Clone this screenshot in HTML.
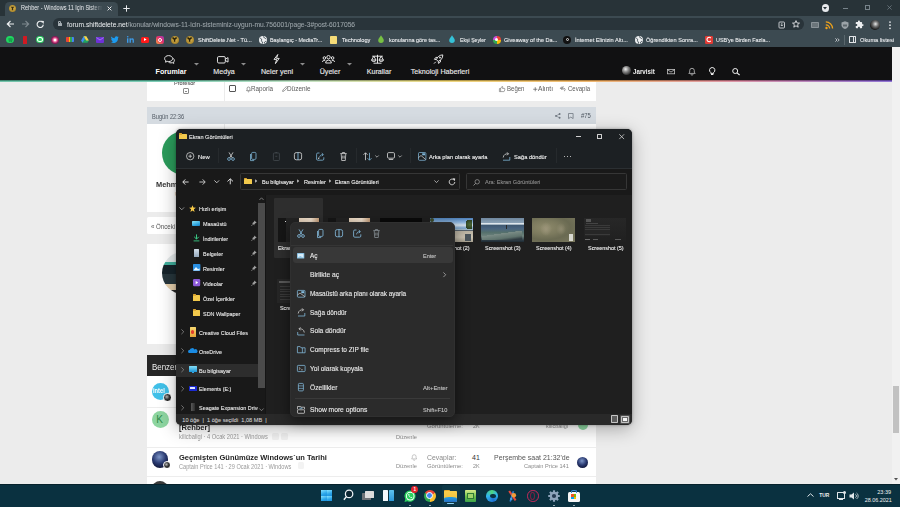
<!DOCTYPE html>
<html><head><meta charset="utf-8"><style>
*{margin:0;padding:0;box-sizing:border-box}
html,body{width:900px;height:507px;overflow:hidden;background:#ececec;font-family:"Liberation Sans",sans-serif}
.a{position:absolute}
.t{position:absolute;white-space:nowrap;line-height:1}
svg{position:absolute;overflow:visible}
.card{position:absolute;background:#fff}
</style></head><body>
<div class="a" style="left:0px;top:0px;width:900px;height:16px;background:#283338;"></div>
<div class="a" style="left:5px;top:2px;width:112.5px;height:14px;background:#3c4a51;border-radius:4.5px 4.5px 0 0"></div>
<div class="a" style="left:0px;top:15.5px;width:900px;height:17px;background:#3c4a51;"></div>
<div class="a" style="left:53px;top:17.8px;width:750.5px;height:12.4px;background:#29343a;border-radius:6.2px"></div>
<div class="a" style="left:0px;top:32px;width:900px;height:15.5px;background:#3c4a51;"></div>
<div class="a" style="left:9px;top:5.2px;width:7.2px;height:7.2px;background:radial-gradient(circle at 50% 45%,#e6c25a,#b08a2a 70%,#6d5418);border-radius:50%"></div>
<svg style="left:10.2px;top:6.3px;" width="5" height="5" viewBox="0 0 5 5"><path d="M0.8 0.8H4.2L3.2 2.3V4.2H1.8V2.3Z" fill="#3a2e10"/></svg>
<div class="t" style="left:20.8px;top:5.3px;font-size:6.5px;color:#e8eaed;width:96px;overflow:hidden;-webkit-mask-image:linear-gradient(90deg,#000 86%,transparent 100%);transform:scaleX(0.85);transform-origin:0 0">Rehber - Windows 11 İçin Sisteminiz Uygun mu</div>
<svg style="left:107px;top:5.6px;" width="5" height="5" viewBox="0 0 5 5"><path d="M0.6 0.6L4.4 4.4M4.4 0.6L0.6 4.4" stroke="#e8eaed" stroke-width="1"/></svg>
<svg style="left:122.8px;top:4.8px;" width="7" height="7" viewBox="0 0 7 7"><path d="M3.5 0.3V6.7M0.3 3.5H6.7" stroke="#e8eaed" stroke-width="1"/></svg>
<div class="a" style="left:821.5px;top:4.3px;width:7.6px;height:7.6px;background:#e8eaed;border-radius:50%"></div>
<svg style="left:823.3px;top:7px;" width="4" height="2.6" viewBox="0 0 4 2.6"><path d="M0 0H4L2 2.4Z" fill="#283338"/></svg>
<div class="a" style="left:843px;top:7.8px;width:5px;height:0.7px;background:#77838a;"></div>
<div class="a" style="left:865px;top:5.3px;width:4.6px;height:4.6px;background:transparent;border:0.7px solid #77838a"></div>
<svg style="left:886.8px;top:5px;" width="5" height="5" viewBox="0 0 5 5"><path d="M0.4 0.4L4.6 4.6M4.6 0.4L0.4 4.6" stroke="#77838a" stroke-width="0.7"/></svg>
<svg style="left:6px;top:20px;" width="9" height="8" viewBox="0 0 9 8"><path d="M8 4H1.5M4.5 1L1.3 4L4.5 7" stroke="#eceef0" stroke-width="1.15" fill="none"/></svg>
<svg style="left:21px;top:20px;" width="9" height="8" viewBox="0 0 9 8"><path d="M1 4H7.5M4.5 1L7.7 4L4.5 7" stroke="#7f8a90" stroke-width="1.05" fill="none"/></svg>
<svg style="left:36px;top:19.8px;" width="9" height="9" viewBox="0 0 9 9"><path d="M7.3 4.6A3.1 3.1 0 1 1 6.3 2.1" stroke="#eceef0" stroke-width="1.1" fill="none"/><path d="M4.8 0.8L7.9 0.9L7.6 4Z" fill="#eceef0"/></svg>
<div class="a" style="left:57.6px;top:22.8px;width:4.2px;height:3.4px;background:#a5adb2;border-radius:0.5px"></div>
<div class="a" style="left:58.4px;top:20.7px;width:2.6px;height:2.8px;background:transparent;border:0.75px solid #a5adb2;border-bottom:none;border-radius:1.3px 1.3px 0 0"></div>
<div class="t" style="left:66.6px;top:22.00px;font-size:6.7px;color:#9aa3a8;transform:scaleX(0.9991);transform-origin:0 0;-webkit-text-stroke:0.08px #9aa3a8"><span style="color:#eef0f2">forum.shiftdelete.net</span>/konular/windows-11-icin-sisteminiz-uygun-mu.756001/page-3#post-6017056</div>
<svg style="left:777.5px;top:20.5px;" width="8" height="8" viewBox="0 0 8 8"><rect x="1" y="1" width="5.5" height="6" rx="0.8" stroke="#e8eaed" stroke-width="0.8" fill="none"/><path d="M3.8 2V5M2.6 3.8L3.8 5L5 3.8" stroke="#e8eaed" stroke-width="0.7" fill="none"/></svg>
<svg style="left:792.2px;top:20.3px;" width="8" height="8" viewBox="0 0 8 8"><path d="M4 0.6L5 3L7.5 3.1L5.6 4.7L6.2 7.2L4 5.8L1.8 7.2L2.4 4.7L0.5 3.1L3 3Z" stroke="#e8eaed" stroke-width="0.85" fill="none"/></svg>
<div class="a" style="left:811px;top:22px;width:8px;height:6px;background:#8a9398;border-radius:0.8px"></div>
<div class="a" style="left:812px;top:23px;width:6px;height:4px;background:#6b757a;"></div>
<svg style="left:825px;top:20.5px;" width="9" height="8.5" viewBox="0 0 9 8.5"><circle cx="1.5" cy="7" r="1.2" fill="#f2a41a"/><path d="M0.8 3.8A3.8 3.8 0 0 1 4.6 7.6M0.8 0.9A6.8 6.8 0 0 1 7.6 7.6" stroke="#f2a41a" stroke-width="1.35" fill="none"/></svg>
<svg style="left:840.5px;top:20.7px;" width="8" height="8" viewBox="0 0 8 8"><path d="M4 0.3L7.5 1.5V4.2C7.5 6 6 7.3 4 8C2 7.3 0.5 6 0.5 4.2V1.5Z" fill="#9ba3a8"/><path d="M2 3.5H6V5.5H2Z" fill="#5d676c"/></svg>
<svg style="left:855.3px;top:20.4px;" width="9" height="9" viewBox="0 0 9 9"><path transform="scale(0.375)" d="M20.5 11H19V7c0-1.1-.9-2-2-2h-4V3.5C13 2.12 11.88 1 10.5 1S8 2.12 8 3.5V5H4c-1.1 0-1.99.9-1.99 2v3.8H3.5c1.49 0 2.7 1.21 2.7 2.7s-1.21 2.7-2.7 2.7H2V20c0 1.1.9 2 2 2h3.8v-1.5c0-1.49 1.210-2.7 2.7-2.7 1.49 0 2.7 1.21 2.7 2.7V22H17c1.1 0 2-.9 2-2v-4h1.5c1.38 0 2.5-1.12 2.5-2.5S21.88 11 20.5 11z" fill="#eceef0"/></svg>
<div class="a" style="left:870px;top:20px;width:9.5px;height:9.5px;background:radial-gradient(circle at 55% 40%,#e8e8e8,#6a6a6a 35%,#1a1a1a 70%);border-radius:50%"></div>
<svg style="left:888.6px;top:20.5px;" width="2" height="9" viewBox="0 0 2 9"><circle cx="1" cy="1.1" r="0.85" fill="#e8eaed"/><circle cx="1" cy="4.2" r="0.85" fill="#e8eaed"/><circle cx="1" cy="7.3" r="0.85" fill="#e8eaed"/></svg>
<div class="a" style="left:6.1px;top:35.7px;width:7.8px;height:7.8px;background:#1ed760;border-radius:50%;"></div>
<svg style="left:7.6px;top:37.6px;" width="5" height="4" viewBox="0 0 5 4"><path d="M0.3 1A5 3 0 0 1 4.7 1.2M0.6 2.2A4 2.5 0 0 1 4.3 2.4M0.9 3.3A3 2 0 0 1 4 3.5" stroke="#153" stroke-width="0.55" fill="none"/></svg>
<div class="a" style="left:22.8px;top:35.6px;width:4.6px;height:8px;background:#d01a22;border-radius:0.5px"></div>
<div class="a" style="left:36.1px;top:35.7px;width:7.8px;height:7.8px;background:#2fd266;border-radius:50%;"></div>
<div class="a" style="left:37.4px;top:37.0px;width:5.2px;height:5.2px;background:#fff;border-radius:50%;"></div>
<div class="a" style="left:38.1px;top:37.7px;width:3.8px;height:3.8px;background:#2fd266;border-radius:50%;"></div>
<div class="a" style="left:51px;top:35.6px;width:8px;height:8px;background:radial-gradient(circle,#fff 15%,#f7a 30%,#8a1a58 60%);border-radius:50%;"></div>
<div class="a" style="left:66.2px;top:37px;width:7.6px;height:5.2px;background:linear-gradient(90deg,#ea4335 0 33%,#fbbc05 0 50%,#34a853 0 75%,#4285f4 0);border-radius:0.8px"></div>
<svg style="left:81px;top:36px;" width="8" height="7" viewBox="0 0 8 7"><path d="M2.7 0.3H5.3L7.8 4.6L6.5 6.7H1.5L0.2 4.6Z" fill="#1fa463"/><path d="M2.7 0.3L0.2 4.6L1.5 6.7L4 2.4Z" fill="#4688f4"/><path d="M5.3 0.3H2.7L5.2 4.6H7.8Z" fill="#ffcf48"/></svg>
<div class="a" style="left:96px;top:36.6px;width:8px;height:6.2px;background:#6e31d8;border-radius:1px"></div>
<svg style="left:96px;top:36.6px;" width="8" height="4" viewBox="0 0 8 4"><path d="M0.3 0.5L4 3L7.7 0.5" stroke="#b798f5" stroke-width="0.7" fill="none"/></svg>
<svg style="left:111px;top:36.3px;" width="8" height="7" viewBox="0 0 8 7"><path d="M7.8 1C7.5 1.2 7.2 1.3 6.9 1.3C7.2 1.1 7.5 0.8 7.6 0.4C7.3 0.6 6.9 0.7 6.6 0.8A1.7 1.7 0 0 0 3.7 2.3C2.3 2.2 1.1 1.6 0.3 0.6C-0.2 1.4 0.1 2.4 0.8 2.9C0.5 2.9 0.3 2.8 0.1 2.7C0.1 3.5 0.7 4.2 1.4 4.4C1.1 4.5 0.9 4.5 0.6 4.4C0.8 5.1 1.5 5.6 2.2 5.6C1.5 6.2 0.6 6.4 -0.2 6.3C3.2 8.3 7.2 6.2 7 1.9C7.3 1.6 7.6 1.3 7.8 1Z" fill="#1d9bf0"/></svg>
<svg style="left:126.5px;top:36px;" width="7" height="7" viewBox="0 0 7 7"><rect x="0" y="2.3" width="1.4" height="4.5" fill="#3d9be9"/><circle cx="0.7" cy="0.8" r="0.8" fill="#3d9be9"/><path d="M2.5 6.8V2.3H3.8V3C4.2 2.3 5 2.2 5.5 2.3C6.5 2.4 6.9 3.1 6.9 4.2V6.8H5.6V4.4C5.6 3.7 5.3 3.4 4.8 3.4C4.2 3.4 3.9 3.8 3.9 4.5V6.8Z" fill="#3d9be9"/></svg>
<div class="a" style="left:141px;top:36.8px;width:8px;height:5.8px;background:#ff1a1a;border-radius:1.6px"></div>
<svg style="left:143.8px;top:38.2px;" width="3" height="3" viewBox="0 0 3 3"><path d="M0 0L2.6 1.5L0 3Z" fill="#fff"/></svg>
<div class="a" style="left:156px;top:35.6px;width:8px;height:8px;background:linear-gradient(45deg,#f9a03f,#e1306c 55%,#9b3ab8);border-radius:2.2px"></div>
<div class="a" style="left:158px;top:37.6px;width:4px;height:4px;background:transparent;border:0.7px solid #fff;border-radius:50%"></div>
<div class="a" style="left:171px;top:35.6px;width:8px;height:8px;background:radial-gradient(circle at 50% 45%,#e0bb55,#a8842a 70%,#5a4512);border-radius:50%;"></div>
<svg style="left:172.4px;top:37.0px;" width="5.2" height="5.2" viewBox="0 0 5.2 5.2"><path d="M0.3 0.6C1 0 2 0.3 2.6 1.2C3.2 0.3 4.2 0 4.9 0.6C5 2 3.8 2.6 3.3 2.6V4.8H1.9V2.6C1.4 2.6 0.2 2 0.3 0.6Z" fill="#2a2208"/></svg>
<div class="a" style="left:186px;top:35.6px;width:8px;height:8px;background:radial-gradient(circle at 50% 45%,#e0bb55,#a8842a 70%,#5a4512);border-radius:50%;"></div>
<svg style="left:187.4px;top:37.0px;" width="5.2" height="5.2" viewBox="0 0 5.2 5.2"><path d="M0.3 0.6C1 0 2 0.3 2.6 1.2C3.2 0.3 4.2 0 4.9 0.6C5 2 3.8 2.6 3.3 2.6V4.8H1.9V2.6C1.4 2.6 0.2 2 0.3 0.6Z" fill="#2a2208"/></svg>
<div class="t" style="left:197.6px;top:37.00px;font-size:6.1px;color:#eceef0;transform:scaleX(0.9191);transform-origin:0 0;-webkit-text-stroke:0.1px #eceef0">ShiftDelete.Net - Tü...</div>
<div class="a" style="left:258.6px;top:35.6px;width:8px;height:8px;background:#eceef0;border-radius:50%;"></div>
<svg style="left:258.6px;top:35.6px;" width="8" height="8" viewBox="0 0 8 8"><path d="M1.2 2.2C2.3 2.4 2.8 3.2 2.5 4.2C2.2 5 3 5.6 3.5 6.2C3.6 7 3.3 7.5 3 7.8M4.6 0.4C4.2 1.2 5 1.8 5.8 1.8C6.5 2 6.4 3 7 3.2M5.5 7.4C5.2 6.2 6 5.3 7.3 5.3" stroke="#3c4a51" stroke-width="1" fill="none"/></svg>
<div class="t" style="left:270px;top:37.00px;font-size:6.1px;color:#eceef0;transform:scaleX(0.8866);transform-origin:0 0;-webkit-text-stroke:0.1px #eceef0">Başlangıç - MediaTr...</div>
<div class="a" style="left:330.3px;top:35.6px;width:6.6px;height:8px;background:#f6dc78;border-radius:0.8px"></div>
<div class="t" style="left:341.6px;top:37.00px;font-size:6.1px;color:#eceef0;transform:scaleX(0.9203);transform-origin:0 0;-webkit-text-stroke:0.1px #eceef0">Technology</div>
<svg style="left:378px;top:35.300000000000004px;" width="6" height="8.3" viewBox="0 0 6 8.3"><path d="M3 0.2C3.8 1.6 5.8 3.8 5.8 5.3A2.8 2.8 0 0 1 0.2 5.3C0.2 3.8 2.2 1.6 3 0.2Z" fill="#77c043"/></svg>
<div class="t" style="left:389px;top:37.00px;font-size:6.1px;color:#eceef0;transform:scaleX(0.897);transform-origin:0 0;-webkit-text-stroke:0.1px #eceef0">konularına göre tas...</div>
<svg style="left:449px;top:35.300000000000004px;" width="6" height="8.3" viewBox="0 0 6 8.3"><path d="M3 0.2C3.8 1.6 5.8 3.8 5.8 5.3A2.8 2.8 0 0 1 0.2 5.3C0.2 3.8 2.2 1.6 3 0.2Z" fill="#35c2d8"/></svg>
<div class="t" style="left:459.6px;top:37.00px;font-size:6.1px;color:#eceef0;transform:scaleX(0.8457);transform-origin:0 0;-webkit-text-stroke:0.1px #eceef0">Ekşi Şeyler</div>
<div class="a" style="left:492.6px;top:35.6px;width:8px;height:8px;background:conic-gradient(#ea4335 0 25%,#fbbc05 0 50%,#34a853 0 75%,#c94fd8 0);border-radius:50%;"></div>
<div class="a" style="left:494.8px;top:37.800000000000004px;width:3.6px;height:3.6px;background:#fff;border-radius:50%;"></div>
<div class="t" style="left:504px;top:37.00px;font-size:6.1px;color:#eceef0;transform:scaleX(0.9157);transform-origin:0 0;-webkit-text-stroke:0.1px #eceef0">Giveaway of the Da...</div>
<div class="a" style="left:563.4px;top:35.6px;width:8px;height:8px;background:#121212;border-radius:50%;"></div>
<div class="a" style="left:565.8px;top:38.0px;width:3.2px;height:3.2px;background:transparent;border:0.7px solid #ddd;border-radius:50%"></div>
<div class="t" style="left:575px;top:37.00px;font-size:6.1px;color:#eceef0;transform:scaleX(0.9305);transform-origin:0 0;-webkit-text-stroke:0.1px #eceef0">İnternet Elinizin Altı...</div>
<div class="a" style="left:634.6px;top:35.6px;width:8px;height:8px;background:#eceef0;border-radius:50%;"></div>
<svg style="left:634.6px;top:35.6px;" width="8" height="8" viewBox="0 0 8 8"><path d="M1.2 2.2C2.3 2.4 2.8 3.2 2.5 4.2C2.2 5 3 5.6 3.5 6.2C3.6 7 3.3 7.5 3 7.8M4.6 0.4C4.2 1.2 5 1.8 5.8 1.8C6.5 2 6.4 3 7 3.2M5.5 7.4C5.2 6.2 6 5.3 7.3 5.3" stroke="#3c4a51" stroke-width="1" fill="none"/></svg>
<div class="t" style="left:646px;top:37.00px;font-size:6.1px;color:#eceef0;transform:scaleX(0.9221);transform-origin:0 0;-webkit-text-stroke:0.1px #eceef0">Öğrendikten Sonra...</div>
<div class="a" style="left:704.7px;top:35.6px;width:8px;height:8px;background:#e23b35;border-radius:1.2px"></div>
<svg style="left:705.9000000000001px;top:37.1px;" width="5.6" height="5" viewBox="0 0 5.6 5"><path d="M4.8 1A2.2 2.2 0 1 0 4.8 4" stroke="#fff" stroke-width="1.1" fill="none"/></svg>
<div class="t" style="left:715.7px;top:37.00px;font-size:6.1px;color:#eceef0;transform:scaleX(0.8828);transform-origin:0 0;-webkit-text-stroke:0.1px #eceef0">USB'ye Birden Fazla...</div>
<svg style="left:834.8px;top:37.6px;" width="5" height="4" viewBox="0 0 5 4"><path d="M0.4 0.4L2 2L0.4 3.6M2.6 0.4L4.2 2L2.6 3.6" stroke="#e8eaed" stroke-width="0.75" fill="none"/></svg>
<div class="a" style="left:844px;top:35px;width:0.7px;height:9.5px;background:#5a676d;"></div>
<div class="a" style="left:848.6px;top:36px;width:7.4px;height:7.4px;background:transparent;border:0.75px solid #e0e3e6;border-radius:0.6px"></div>
<div class="a" style="left:852.6px;top:36.2px;width:0.7px;height:7px;background:#e0e3e6;"></div>
<div class="t" style="left:859.9px;top:37.00px;font-size:6.1px;color:#eceef0;transform:scaleX(0.9288);transform-origin:0 0;-webkit-text-stroke:0.1px #eceef0">Okuma listesi</div>
<div class="a" style="left:0px;top:47.4px;width:892px;height:33px;background:#111112;"></div>
<div class="a" style="left:0px;top:79.8px;width:892px;height:2.4px;background:linear-gradient(90deg,#4fb394,#5cbfa3 18%,#b5dcb8 34%,#e9cc60 50%,#eaa64e 66%,#d47a8e 82%,#7250c8);"></div>
<div class="a" style="left:0px;top:79.8px;width:892px;height:2.4px;background:linear-gradient(rgba(0,0,0,.55),rgba(0,0,0,0) 45%,rgba(255,255,255,.15) 70%,rgba(255,255,255,.5));"></div>
<div class="a" style="left:892px;top:47.4px;width:8px;height:437px;background:#f1f1f1;"></div>
<div class="a" style="left:893px;top:385.5px;width:6px;height:47px;background:#c1c1c1;"></div>
<svg style="left:894px;top:478px;" width="4" height="3" viewBox="0 0 4 3"><path d="M0 0H4L2 2.5Z" fill="#505050"/></svg>
<div class="t" style="left:171px;top:68.0px;font-size:8px;color:#e8e8e8;transform:translateX(-50%) scaleX(0.89);font-weight:bold;color:#fff">Forumlar</div>
<svg style="left:194.1px;top:63.3px;" width="5" height="3" viewBox="0 0 5 3"><path d="M0 0H5L2.5 2.5Z" fill="#8c8c8c"/></svg>
<div class="t" style="left:223.8px;top:68.0px;font-size:8px;color:#e8e8e8;transform:translateX(-50%) scaleX(0.89);-webkit-text-stroke:0.15px #e8e8e8">Medya</div>
<svg style="left:241.4px;top:63.3px;" width="5" height="3" viewBox="0 0 5 3"><path d="M0 0H5L2.5 2.5Z" fill="#8c8c8c"/></svg>
<div class="t" style="left:276.9px;top:68.0px;font-size:8px;color:#e8e8e8;transform:translateX(-50%) scaleX(0.89);-webkit-text-stroke:0.15px #e8e8e8">Neler yeni</div>
<svg style="left:300.4px;top:63.3px;" width="5" height="3" viewBox="0 0 5 3"><path d="M0 0H5L2.5 2.5Z" fill="#8c8c8c"/></svg>
<div class="t" style="left:329.8px;top:68.0px;font-size:8px;color:#e8e8e8;transform:translateX(-50%) scaleX(0.89);-webkit-text-stroke:0.15px #e8e8e8">Üyeler</div>
<svg style="left:346.8px;top:63.3px;" width="5" height="3" viewBox="0 0 5 3"><path d="M0 0H5L2.5 2.5Z" fill="#8c8c8c"/></svg>
<div class="t" style="left:378.7px;top:68.0px;font-size:8px;color:#e8e8e8;transform:translateX(-50%) scaleX(0.89);-webkit-text-stroke:0.15px #e8e8e8">Kurallar</div>
<div class="t" style="left:440px;top:68.0px;font-size:8px;color:#e8e8e8;transform:translateX(-50%) scaleX(0.89);-webkit-text-stroke:0.15px #e8e8e8">Teknoloji Haberleri</div>
<svg style="left:164px;top:55.2px;" width="11" height="9" viewBox="0 0 11 9"><path d="M4.6 0.6C2.4 0.6 0.6 1.9 0.6 3.6C0.6 4.5 1.1 5.3 1.9 5.8L1.5 7.2L3.2 6.4C3.7 6.5 4.1 6.6 4.6 6.6C6.8 6.6 8.6 5.3 8.6 3.6C8.6 1.9 6.8 0.6 4.6 0.6Z" stroke="#ececec" stroke-width="0.95" fill="none"/><path d="M9.2 3.4C10 3.9 10.4 4.6 10.4 5.4C10.4 6.1 10 6.7 9.5 7.1L9.8 8.4L8.3 7.7C7.9 7.8 7.5 7.9 7 7.9C6 7.9 5.1 7.6 4.5 7.1" stroke="#ececec" stroke-width="0.95" fill="none"/></svg>
<svg style="left:216.7px;top:56.2px;" width="12" height="8" viewBox="0 0 12 8"><rect x="0.5" y="0.6" width="7.8" height="6.4" rx="1.2" stroke="#ececec" stroke-width="0.95" fill="none"/><path d="M8.3 3.2L11 1.6V6.1L8.3 4.5" stroke="#ececec" stroke-width="0.95" fill="none"/></svg>
<svg style="left:272.7px;top:54.4px;" width="7" height="10" viewBox="0 0 7 10"><path d="M4.8 0.5L1 5.4H3.7L2.4 9.6L6.2 4.4H3.5Z" stroke="#ececec" stroke-width="0.95" fill="none"/></svg>
<svg style="left:322.2px;top:55px;" width="13" height="9" viewBox="0 0 13 9"><circle cx="6.5" cy="2.2" r="1.7" stroke="#ececec" stroke-width="0.95" fill="none"/><circle cx="2.4" cy="3" r="1.3" stroke="#ececec" stroke-width="0.95" fill="none"/><circle cx="10.6" cy="3" r="1.3" stroke="#ececec" stroke-width="0.95" fill="none"/><path d="M3.6 8A2.9 2.9 0 0 1 9.4 8ZM0.4 7A2.1 2.1 0 0 1 3.2 5.4M12.6 7A2.1 2.1 0 0 0 9.8 5.4" stroke="#ececec" stroke-width="0.95" fill="none"/></svg>
<svg style="left:371px;top:54.3px;" width="13" height="10" viewBox="0 0 13 10"><path d="M6.5 0.8V9.2M2.5 9.2H10.5M1.2 2.2H11.8M2.8 2.2L0.6 6H5ZM10.2 2.2L8 6H12.4ZM0.6 6A2.2 1.5 0 0 0 5 6M8 6A2.2 1.5 0 0 0 12.4 6" stroke="#ececec" stroke-width="0.95" fill="none"/></svg>
<svg style="left:433px;top:54.3px;" width="11" height="10" viewBox="0 0 11 10"><path d="M9.8 0.9C6.8 0.9 4.4 2.8 3.4 5.6L5.2 7.4C8 6.4 9.8 4 9.8 0.9ZM3.4 5.6L1.4 5.3L2.8 3.4H4.8M5.2 7.4L5.5 9.4L7.4 8V6M2.8 7.8L1 9.6" stroke="#ececec" stroke-width="0.95" fill="none"/><circle cx="7" cy="3.6" r="0.9" fill="#ececec"/></svg>
<div class="a" style="left:621.9px;top:65.8px;width:9.5px;height:9.5px;background:radial-gradient(circle at 40% 35%,#f0f0f0,#8a8a8a 35%,#3a3a3a 70%,#222);border-radius:50%"></div>
<div class="t" style="left:633px;top:68.0px;font-size:7.3px;color:#f0f0f0;font-weight:bold;transform:scaleX(0.85);transform-origin:0 0">Jarvisit</div>
<svg style="left:667px;top:69px;" width="8" height="5" viewBox="0 0 8 5"><rect x="0.4" y="0.4" width="7.2" height="4.4" stroke="#c4c4c4" stroke-width="0.8" fill="none"/><path d="M0.4 0.6L4 3.1L7.6 0.6" stroke="#c4c4c4" stroke-width="0.8" fill="none"/></svg>
<svg style="left:688px;top:68px;" width="8" height="7" viewBox="0 0 8 7"><path d="M0.8 5.4H7.2L6.3 4.2V2.6A2.3 2.3 0 0 0 1.7 2.6V4.2ZM3 6.2A1 1 0 0 0 5 6.2" stroke="#c4c4c4" stroke-width="0.8" fill="none"/></svg>
<svg style="left:709px;top:67.2px;" width="7" height="8" viewBox="0 0 7 8"><path d="M3.2 0.5A2.7 2.7 0 0 0 1.8 5.5V6.4H4.6V5.5A2.7 2.7 0 0 0 3.2 0.5ZM2 7.5H4.4" stroke="#f0f0f0" stroke-width="1" fill="none"/></svg>
<svg style="left:731.8px;top:68px;" width="8" height="7" viewBox="0 0 8 7"><circle cx="3.2" cy="3" r="2.5" stroke="#f0f0f0" stroke-width="1" fill="none"/><path d="M5 4.8L7.6 7" stroke="#f0f0f0" stroke-width="1.1"/></svg>
<div class="a" style="left:147px;top:81.5px;width:448.7px;height:19.9px;background:#ffffff;"></div>
<div class="a" style="left:223.6px;top:81.5px;width:0.7px;height:19.9px;background:#ebebeb;"></div>
<div class="a" style="left:0;top:82px;width:892px;height:10px;overflow:hidden">
<div class="t" style="left:174px;top:-2.00px;font-size:6.2px;color:#5a5a5a;transform:scaleX(0.9048);transform-origin:0 0;-webkit-text-stroke:0.1px #5a5a5a">Profesör</div>
</div>
<div class="a" style="left:183.2px;top:87.8px;width:6px;height:6px;background:transparent;border:0.8px solid #8a8a8a;border-radius:1px"></div>
<div class="a" style="left:185.2px;top:91.2px;width:1.6px;height:1.2px;background:#8a8a8a;"></div>
<div class="a" style="left:229.2px;top:85.3px;width:6.6px;height:6.6px;background:transparent;border:1px solid #555;border-radius:1px"></div>
<svg style="left:245.6px;top:85.8px;" width="5" height="6" viewBox="0 0 5 6"><path d="M0.5 4.6H4.5L3.9 3.8V2.4A1.4 1.4 0 0 0 1.1 2.4V3.8ZM1.9 5.3A0.6 0.6 0 0 0 3.1 5.3" stroke="#5a5a5a" stroke-width="0.6" fill="none"/></svg>
<div class="t" style="left:251.3px;top:86.00px;font-size:6.6px;color:#5a5a5a;transform:scaleX(0.9562);transform-origin:0 0;">Raporla</div>
<svg style="left:281.5px;top:85.8px;" width="6" height="6" viewBox="0 0 6 6"><path d="M0.6 5.4L0.9 4L4.3 0.6L5.4 1.7L2 5.1Z" stroke="#5a5a5a" stroke-width="0.6" fill="none"/></svg>
<div class="t" style="left:287.4px;top:86.00px;font-size:6.6px;color:#5a5a5a;transform:scaleX(0.9705);transform-origin:0 0;">Düzenle</div>
<svg style="left:499.2px;top:85.5px;" width="6.2" height="6" viewBox="0 0 6.2 6"><path d="M0.4 2.6H1.6V5.6H0.4ZM1.6 2.6L3 0.4C3.6 0.4 3.9 0.8 3.7 1.6L3.5 2.4H5.4C5.9 2.4 6 2.9 5.9 3.2L5.3 5.3C5.2 5.6 5 5.6 4.7 5.6H1.6" stroke="#5a5a5a" stroke-width="0.55" fill="none"/></svg>
<div class="t" style="left:507.1px;top:86.00px;font-size:6.6px;color:#5a5a5a;transform:scaleX(0.917);transform-origin:0 0;">Beğen</div>
<svg style="left:532.5px;top:86.5px;" width="4.5" height="4.5" viewBox="0 0 4.5 4.5"><path d="M2.25 0.2V4.3M0.2 2.25H4.3" stroke="#5a5a5a" stroke-width="0.7"/></svg>
<div class="t" style="left:537.7px;top:86.00px;font-size:6.6px;color:#5a5a5a;transform:scaleX(0.9974);transform-origin:0 0;">Alıntı</div>
<svg style="left:560.3px;top:86.3px;" width="6.3" height="5" viewBox="0 0 6.3 5"><path d="M2.2 0.4L0.4 2.2L2.2 4M0.4 2.2H4A1.8 1.5 0 0 1 4 5" stroke="#5a5a5a" stroke-width="0.6" fill="none"/><path d="M3.5 0.4L1.7 2.2L3.5 4" stroke="#5a5a5a" stroke-width="0.6" fill="none"/></svg>
<div class="t" style="left:567.6px;top:86.00px;font-size:6.6px;color:#5a5a5a;transform:scaleX(0.9127);transform-origin:0 0;">Cevapla</div>
<div class="a" style="left:147px;top:106.9px;width:448.7px;height:16.8px;background:#d5dbe1;"></div>
<div class="t" style="left:152.3px;top:114.00px;font-size:6.8px;color:#4f5862;transform:scaleX(0.8323);transform-origin:0 0;">Bugün 22:36</div>
<svg style="left:554.8px;top:112.8px;" width="5.6" height="5.8" viewBox="0 0 5.6 5.8"><circle cx="4.6" cy="1" r="0.95" fill="#6b747d"/><circle cx="1" cy="2.9" r="0.95" fill="#6b747d"/><circle cx="4.6" cy="4.8" r="0.95" fill="#6b747d"/><path d="M4.6 1L1 2.9L4.6 4.8" stroke="#6b747d" stroke-width="0.6" fill="none"/></svg>
<svg style="left:567.6px;top:112.8px;" width="5.6" height="6" viewBox="0 0 5.6 6"><path d="M0.5 0.5H5.1V5.6L2.8 4.1L0.5 5.6Z" stroke="#6b747d" stroke-width="0.75" fill="none"/></svg>
<div class="t" style="left:580.5px;top:113.00px;font-size:6.6px;color:#4f5862;transform:scaleX(0.8991);transform-origin:0 0;">#75</div>
<div class="a" style="left:147px;top:123.7px;width:448.7px;height:88px;background:#ffffff;"></div>
<div class="a" style="left:223.6px;top:123.7px;width:0.7px;height:88px;background:#ebebeb;"></div>
<div class="a" style="left:162px;top:130.7px;width:44px;height:44px;background:#2b9b5b;border-radius:50%"></div>
<div class="t" style="left:155.8px;top:181.00px;font-size:7.8px;color:#333;transform:scaleX(0.95);transform-origin:0 0;font-weight:bold">Mehmet</div>
<div class="t" style="left:175px;top:191.00px;font-size:6px;color:#999;">Ü</div>
<div class="a" style="left:147px;top:217.4px;width:60px;height:16.2px;background:#ffffff;border-radius:1.5px"></div>
<div class="t" style="left:151.3px;top:224.00px;font-size:6.8px;color:#555;transform:scaleX(0.9);transform-origin:0 0;">« Önceki</div>
<div class="a" style="left:147px;top:243.8px;width:448.7px;height:100.2px;background:#ffffff;"></div>
<div class="a" style="left:162px;top:252.2px;width:42px;height:42px;background:linear-gradient(#e4e9ea 0 23%,#3fae9c 23% 30%,#16232a 30% 52%,#27363c 52% 77%,#e6d0ad 77% 90%,#2a2a2a 90%);border-radius:50%"></div>
<div class="a" style="left:147px;top:355px;width:448.7px;height:21px;background:#262626;"></div>
<div class="t" style="left:152.1px;top:363.00px;font-size:8.8px;color:#f2f2f2;transform:scaleX(0.9);transform-origin:0 0;">Benzer konular</div>
<div class="a" style="left:147px;top:376px;width:448.7px;height:108px;background:#ffffff;"></div>
<div class="a" style="left:147px;top:406.7px;width:448.7px;height:0.7px;background:#ededed;"></div>
<div class="a" style="left:147px;top:446.8px;width:448.7px;height:0.7px;background:#ededed;"></div>
<div class="a" style="left:147px;top:475.6px;width:448.7px;height:0.7px;background:#ededed;"></div>
<div class="a" style="left:151.7px;top:382.8px;width:17.4px;height:17.4px;background:#40c0e8;border-radius:50%"></div>
<div class="t" style="left:153.4px;top:388.00px;font-size:6.4px;color:#fff;transform:scaleX(0.9);transform-origin:0 0;font-weight:bold">intel</div>
<div class="a" style="left:163.2px;top:393.4px;width:8.6px;height:8.6px;background:radial-gradient(circle at 40% 40%,#bbb,#333 45%,#111);border-radius:50%;border:1px solid #fff"></div>
<div class="a" style="left:151.8px;top:410.8px;width:17.3px;height:17.3px;background:#8dd5a0;border-radius:50%"></div>
<div class="t" style="left:156.3px;top:415.00px;font-size:10px;color:#2e8a4a;">K</div>
<div class="t" style="left:178.8px;top:425.00px;font-size:7.1px;color:#222;transform:scaleX(1.0621);transform-origin:0 0;font-weight:bold">[Rehber]</div>
<div class="t" style="left:178.8px;top:434.00px;font-size:6.3px;color:#9a9a9a;transform:scaleX(0.9101);transform-origin:0 0;">kilicbaligi · 4 Ocak 2021 · Windows</div>
<div class="a" style="left:272px;top:433.2px;width:7px;height:7px;background:#f3f3f3;border-radius:1.5px"></div>
<div class="a" style="left:281px;top:433.2px;width:7px;height:7px;background:#f3f3f3;border-radius:1.5px"></div>
<div class="t" style="left:396.3px;top:435.00px;font-size:5.8px;color:#8a8a8a;transform:scaleX(0.9775);transform-origin:0 0;">Düzenle</div>
<div class="t" style="left:426.6px;top:424.00px;font-size:5.5px;color:#8a8a8a;transform:scaleX(1.0804);transform-origin:0 0;">Görüntüleme:</div>
<div class="t" style="left:473.4px;top:424.00px;font-size:5.8px;color:#8a8a8a;transform:scaleX(0.95);transform-origin:0 0;">2K</div>
<div class="t" style="left:545.6px;top:424.00px;font-size:5.8px;color:#8a8a8a;transform:scaleX(0.95);transform-origin:0 0;">kilicbaligi</div>
<div class="a" style="left:577.7px;top:420.3px;width:10px;height:10px;background:#8dd5a0;border-radius:50%"></div>
<div class="a" style="left:151.8px;top:451.3px;width:16.5px;height:16.5px;background:radial-gradient(circle at 45% 35%,#7d96c8,#2b3b72 45%,#0e1436 80%);border-radius:50%"></div>
<div class="a" style="left:162.5px;top:460.5px;width:8.6px;height:8.6px;background:radial-gradient(circle at 40% 40%,#bbb,#333 45%,#111);border-radius:50%;border:1px solid #fff"></div>
<div class="t" style="left:178.8px;top:455.00px;font-size:7.1px;color:#222;transform:scaleX(1.0584);transform-origin:0 0;font-weight:bold">Geçmişten Günümüze Windows`un Tarihi</div>
<div class="t" style="left:178.8px;top:464.00px;font-size:6.3px;color:#9a9a9a;transform:scaleX(0.8917);transform-origin:0 0;">Captain Price 141 · 29 Ocak 2021 · Windows</div>
<div class="a" style="left:297.5px;top:462px;width:6.5px;height:7px;background:#f3f3f3;border-radius:1.5px"></div>
<svg style="left:410.8px;top:454px;" width="6.4" height="6.4" viewBox="0 0 6.4 6.4"><path d="M0.6 4.9H5.8L5.1 4V2.6A1.9 1.9 0 0 0 1.3 2.6V4ZM2.4 5.6A0.8 0.8 0 0 0 4 5.6" stroke="#a5a5a5" stroke-width="0.6" fill="none"/></svg>
<div class="t" style="left:395.8px;top:464.00px;font-size:5.8px;color:#8a8a8a;transform:scaleX(0.9775);transform-origin:0 0;">Düzenle</div>
<div class="t" style="left:426.9px;top:454.00px;font-size:7.0px;color:#8a8a8a;transform:scaleX(0.9848);transform-origin:0 0;">Cevaplar:</div>
<div class="t" style="left:472px;top:454.00px;font-size:7.0px;color:#333;">41</div>
<div class="t" style="left:426.9px;top:464.00px;font-size:5.5px;color:#8a8a8a;transform:scaleX(1.0804);transform-origin:0 0;">Görüntüleme:</div>
<div class="t" style="left:473.4px;top:464.00px;font-size:5.8px;color:#8a8a8a;transform:scaleX(0.95);transform-origin:0 0;">2K</div>
<div class="t" style="left:493.7px;top:454.00px;font-size:7.0px;color:#555;transform:scaleX(0.9992);transform-origin:0 0;">Perşembe saat 21:32'de</div>
<div class="t" style="left:523.9px;top:464.00px;font-size:5.8px;color:#8a8a8a;transform:scaleX(0.9739);transform-origin:0 0;">Captain Price 141</div>
<div class="a" style="left:576.5px;top:456.5px;width:11.6px;height:11.6px;background:radial-gradient(circle at 45% 35%,#7d96c8,#2b3b72 45%,#0e1436 80%);border-radius:50%"></div>
<div class="a" style="left:152px;top:481.2px;width:16px;height:16px;background:#3a3a3a;border-radius:50%"></div>
<div class="a" style="left:176px;top:129.3px;width:456px;height:295.7px;border-radius:5px;box-shadow:0 4px 18px rgba(0,0,0,.30),0 0 3px rgba(0,0,0,.35)"></div>
<div class="a" style="left:176px;top:129.3px;width:456px;height:295.7px;background:#1c1c1c;border-radius:5px;overflow:hidden">
<div class="a" style="left:0px;top:0.0px;width:456px;height:39.2px;background:#1c2023;"></div>
<div class="a" style="left:0px;top:39.0px;width:456px;height:0.7px;background:#2b2f32;"></div>
<div class="a" style="left:0px;top:39.7px;width:456px;height:26px;background:#191919;"></div>
<div class="a" style="left:3.2px;top:4.9px;width:7.6px;height:4.9px;background:#f2c94c;border-radius:0.6px"></div>
<div class="a" style="left:3.2px;top:4.0px;width:3.2px;height:1.6px;background:#dca530;border-radius:0.6px 0.6px 0 0"></div>
<div class="t" style="left:12.9px;top:4.70px;font-size:6px;color:#ececec;transform:scaleX(0.9294);transform-origin:0 0;-webkit-text-stroke:0.1px #ececec;">Ekran Görüntüleri</div>
<div class="a" style="left:400px;top:7.0px;width:5px;height:0.8px;background:#d0d0d0;"></div>
<div class="a" style="left:421px;top:4.5px;width:5px;height:5px;background:transparent;border:0.8px solid #d0d0d0;border-radius:0.5px"></div>
<svg style="left:442.6px;top:4.5px;" width="5.4" height="5.4" viewBox="0 0 5.4 5.4"><path d="M0.3 0.3L5.1 5.1M5.1 0.3L0.3 5.1" stroke="#d0d0d0" stroke-width="0.8"/></svg>
<svg style="left:10px;top:23.2px;" width="8.4" height="8.4" viewBox="0 0 8.4 8.4"><circle cx="4.2" cy="4.2" r="3.7" stroke="#dcdcdc" stroke-width="0.75" fill="none"/><path d="M4.2 2.4V6M2.4 4.2H6" stroke="#dcdcdc" stroke-width="0.75"/></svg>
<div class="t" style="left:21.7px;top:25.70px;font-size:5.9px;color:#f2f2f2;transform:scaleX(0.9998);transform-origin:0 0;-webkit-text-stroke:0.1px #f2f2f2;">New</div>
<div class="a" style="left:42.3px;top:19.2px;width:0.7px;height:15px;background:#262a2d;"></div>
<div class="a" style="left:180px;top:19.2px;width:0.7px;height:15px;background:#262a2d;"></div>
<div class="a" style="left:233.8px;top:19.2px;width:0.7px;height:15px;background:#262a2d;"></div>
<div class="a" style="left:380px;top:19.2px;width:0.7px;height:15px;background:#262a2d;"></div>
<svg style="left:51px;top:22.7px;" width="8" height="9" viewBox="0 0 8 9"><circle cx="2" cy="7" r="1.4" stroke="#7fb6d8" stroke-width="0.8" fill="none"/><circle cx="6" cy="7" r="1.4" stroke="#7fb6d8" stroke-width="0.8" fill="none"/><path d="M2.8 5.8L6 0.4M5.2 5.8L2 0.4" stroke="#dcdcdc" stroke-width="0.8"/></svg>
<svg style="left:74px;top:22.7px;" width="6.5" height="9" viewBox="0 0 6.5 9"><rect x="1.6" y="0.4" width="4.4" height="7" rx="1.1" stroke="#7fb6d8" stroke-width="0.8" fill="none"/><path d="M0.5 2V8.6H4.2" stroke="#7fb6d8" stroke-width="0.8" fill="none"/></svg>
<svg style="left:96.5px;top:22.7px;" width="7" height="9" viewBox="0 0 7 9"><rect x="0.4" y="1" width="6" height="7.5" rx="0.8" stroke="#454c51" stroke-width="0.75" fill="none"/><path d="M2.3 4.3H4.3M2.3 0.5H4.3" stroke="#454c51" stroke-width="0.75"/></svg>
<svg style="left:118.3px;top:23.0px;" width="8" height="8.5" viewBox="0 0 8 8.5"><rect x="0.4" y="0.6" width="7.2" height="7.2" rx="1.8" stroke="#dcdcdc" stroke-width="0.8" fill="none"/><path d="M4 0.4V8" stroke="#7fb6d8" stroke-width="0.9"/></svg>
<svg style="left:139.8px;top:22.7px;" width="9" height="9" viewBox="0 0 9 9"><path d="M3.5 1H1.8A1.2 1.2 0 0 0 0.6 2.2V7A1.2 1.2 0 0 0 1.8 8.2H6.6A1.2 1.2 0 0 0 7.8 7V5.3" stroke="#7fb6d8" stroke-width="0.8" fill="none"/><path d="M3.6 5.4C3.8 3.6 5 2.6 7 2.6M5.8 1.1L7.4 2.6L5.8 4.1" stroke="#7fb6d8" stroke-width="0.8" fill="none"/><circle cx="2.7" cy="6.3" r="0.7" fill="#dcdcdc"/></svg>
<svg style="left:163.5px;top:22.7px;" width="7" height="9" viewBox="0 0 7 9"><path d="M0.3 1.6H6.7M2.4 1.6V0.5H4.6V1.6M1.2 1.6L1.7 8.5H5.3L5.8 1.6M2.8 3.6V6.6M4.2 3.6V6.6" stroke="#dcdcdc" stroke-width="0.75" fill="none"/></svg>
<svg style="left:186.7px;top:22.7px;" width="9" height="9" viewBox="0 0 9 9"><path d="M2.5 8.2V0.8M0.5 2.8L2.5 0.8L4.5 2.8" stroke="#dcdcdc" stroke-width="0.8" fill="none"/><path d="M6.5 0.8V8.2M4.5 6.2L6.5 8.2L8.5 6.2" stroke="#7fb6d8" stroke-width="0.8" fill="none"/></svg>
<svg style="left:198.6px;top:25.7px;" width="4" height="3" viewBox="0 0 4 3"><path d="M0.3 0.5L2 2.2L3.7 0.5" stroke="#cfcfcf" stroke-width="0.7" fill="none"/></svg>
<svg style="left:210.6px;top:23.2px;" width="8" height="8" viewBox="0 0 8 8"><rect x="0.5" y="0.6" width="7" height="5.6" rx="1.2" stroke="#dcdcdc" stroke-width="0.8" fill="none"/><path d="M1.8 7.5H6.2" stroke="#dcdcdc" stroke-width="0.8"/></svg>
<svg style="left:221.8px;top:25.7px;" width="4" height="3" viewBox="0 0 4 3"><path d="M0.3 0.5L2 2.2L3.7 0.5" stroke="#cfcfcf" stroke-width="0.7" fill="none"/></svg>
<svg style="left:241.6px;top:22.7px;" width="9" height="9" viewBox="0 0 9 9"><rect x="0.5" y="0.5" width="7.4" height="7.8" rx="1" stroke="#7fb6d8" stroke-width="0.75" fill="none"/><path d="M0.5 5.6L3 3.5L7.8 7.6" stroke="#dcdcdc" stroke-width="0.7" fill="none"/><rect x="4.2" y="1.3" width="2.8" height="2" fill="#7fb6d8"/></svg>
<div class="t" style="left:253.2px;top:25.70px;font-size:5.9px;color:#f2f2f2;transform:scaleX(0.9712);transform-origin:0 0;-webkit-text-stroke:0.1px #f2f2f2;">Arka plan olarak ayarla</div>
<svg style="left:326px;top:22.7px;" width="9" height="9" viewBox="0 0 9 9"><path d="M1 8.2H7.8V5" stroke="#7fb6d8" stroke-width="0.8" fill="none"/><path d="M1.2 5.5C1.6 2.6 3.5 1.6 6.4 1.8M5 0.3L6.5 1.8L5 3.3" stroke="#dcdcdc" stroke-width="0.75" fill="none"/></svg>
<div class="t" style="left:337.7px;top:25.70px;font-size:5.9px;color:#f2f2f2;transform:scaleX(0.9678);transform-origin:0 0;-webkit-text-stroke:0.1px #f2f2f2;">Sağa döndür</div>
<div class="a" style="left:387.6px;top:26.4px;width:1.4px;height:1.4px;background:#e8e8e8;border-radius:50%"></div>
<div class="a" style="left:390.7px;top:26.4px;width:1.4px;height:1.4px;background:#e8e8e8;border-radius:50%"></div>
<div class="a" style="left:393.8px;top:26.4px;width:1.4px;height:1.4px;background:#e8e8e8;border-radius:50%"></div>
<svg style="left:6.3px;top:49.5px;" width="7" height="6" viewBox="0 0 7 6"><path d="M6.6 3H0.9M3.3 0.4L0.8 3L3.3 5.6" stroke="#e0e0e0" stroke-width="0.95" fill="none"/></svg>
<svg style="left:22.6px;top:49.5px;" width="7" height="6" viewBox="0 0 7 6"><path d="M0.4 3H6.1M3.7 0.4L6.2 3L3.7 5.6" stroke="#c8c8c8" stroke-width="0.95" fill="none"/></svg>
<svg style="left:37.8px;top:50.9px;" width="5.5" height="3.5" viewBox="0 0 5.5 3.5"><path d="M0.4 0.4L2.75 2.8L5.1 0.4" stroke="#d0d0d0" stroke-width="0.9" fill="none"/></svg>
<svg style="left:51px;top:49.0px;" width="6.5" height="6.5" viewBox="0 0 6.5 6.5"><path d="M3.25 6.3V0.9M0.5 3.4L3.25 0.8L6 3.4" stroke="#e0e0e0" stroke-width="0.95" fill="none"/></svg>
<div class="a" style="left:64.3px;top:44.1px;width:219.8px;height:17px;background:#1b1b1b;border:0.7px solid #363636;border-radius:1.5px"></div>
<div class="a" style="left:67.9px;top:49.3px;width:8.2px;height:5.5px;background:#f2c94c;border-radius:0.6px"></div>
<div class="a" style="left:67.9px;top:48.5px;width:3.4px;height:1.6px;background:#dca530;border-radius:0.6px 0.6px 0 0"></div>
<svg style="left:79px;top:50.2px;" width="2.5" height="4" viewBox="0 0 2.5 4"><path d="M0.2 0.2L2.2 2L0.2 3.8Z" fill="#cfcfcf"/></svg>
<svg style="left:121px;top:50.2px;" width="2.5" height="4" viewBox="0 0 2.5 4"><path d="M0.2 0.2L2.2 2L0.2 3.8Z" fill="#cfcfcf"/></svg>
<svg style="left:153px;top:50.2px;" width="2.5" height="4" viewBox="0 0 2.5 4"><path d="M0.2 0.2L2.2 2L0.2 3.8Z" fill="#cfcfcf"/></svg>
<div class="t" style="left:85.9px;top:50.70px;font-size:5.9px;color:#f0f0f0;transform:scaleX(0.9415);transform-origin:0 0;-webkit-text-stroke:0.1px #f0f0f0;">Bu bilgisayar</div>
<div class="t" style="left:127.5px;top:50.70px;font-size:5.9px;color:#f0f0f0;transform:scaleX(0.941);transform-origin:0 0;-webkit-text-stroke:0.1px #f0f0f0;">Resimler</div>
<div class="t" style="left:159.3px;top:50.70px;font-size:5.9px;color:#f0f0f0;transform:scaleX(0.9473);transform-origin:0 0;-webkit-text-stroke:0.1px #f0f0f0;">Ekran Görüntüleri</div>
<svg style="left:257.8px;top:50.9px;" width="5" height="3.5" viewBox="0 0 5 3.5"><path d="M0.4 0.4L2.5 2.6L4.6 0.4" stroke="#cfcfcf" stroke-width="0.75" fill="none"/></svg>
<svg style="left:271.5px;top:48.7px;" width="8" height="8" viewBox="0 0 8 8"><path d="M6.8 4A2.8 2.8 0 1 1 5.8 1.8" stroke="#dcdcdc" stroke-width="0.9" fill="none"/><path d="M4.6 0.3L7.2 0.6L6.8 3.2Z" fill="#dcdcdc"/></svg>
<div class="a" style="left:290.2px;top:44.1px;width:161px;height:17px;background:#1b1b1b;border:0.7px solid #363636;border-radius:1.5px"></div>
<svg style="left:296.8px;top:49.3px;" width="7" height="7" viewBox="0 0 7 7"><circle cx="4.2" cy="2.8" r="2.2" stroke="#9a9a9a" stroke-width="0.75" fill="none"/><path d="M2.7 4.3L0.5 6.5" stroke="#9a9a9a" stroke-width="0.85"/></svg>
<div class="t" style="left:309px;top:50.70px;font-size:5.9px;color:#8c8c8c;transform:scaleX(0.9439);transform-origin:0 0;-webkit-text-stroke:0.1px #8c8c8c;">Ara: Ekran Görüntüleri</div>
<div class="a" style="left:0px;top:65.7px;width:90.5px;height:219.3px;background:#191919;"></div>
<div class="a" style="left:90.3px;top:65.7px;width:366px;height:219.3px;background:#1f1f1f;"></div>
<div class="a" style="left:89px;top:65.7px;width:1.3px;height:219.3px;background:#151515;"></div>
<div class="a" style="left:81.7px;top:73.7px;width:7.2px;height:185.2px;background:#4b4b4b;"></div>
<svg style="left:82.8px;top:68.0px;" width="5" height="3.5" viewBox="0 0 5 3.5"><path d="M0.4 3L2.5 0.8L4.6 3" stroke="#9a9a9a" stroke-width="0.7" fill="none"/></svg>
<svg style="left:82.8px;top:279.2px;" width="5" height="3.5" viewBox="0 0 5 3.5"><path d="M0.4 0.5L2.5 2.7L4.6 0.5" stroke="#9a9a9a" stroke-width="0.7" fill="none"/></svg>
<svg style="left:3.3px;top:77.9px;" width="5.5" height="3.5" viewBox="0 0 5.5 3.5"><path d="M0.4 0.4L2.75 2.8L5.1 0.4" stroke="#b0b0b0" stroke-width="0.75" fill="none"/></svg>
<svg style="left:13.3px;top:75.5px;" width="7" height="7.4" viewBox="0 0 7 7.4"><path d="M3.5 0.2L4.4 2.6L6.9 2.7L4.9 4.3L5.6 6.9L3.5 5.5L1.4 6.9L2.1 4.3L0.1 2.7L2.6 2.6Z" fill="#f7c948"/></svg>
<div class="t" style="left:23px;top:76.70px;font-size:6.2px;color:#ebebeb;transform:scaleX(0.8938);transform-origin:0 0;-webkit-text-stroke:0.1px #ebebeb;">Hızlı erişim</div>
<div class="a" style="left:16.3px;top:91.3px;width:8px;height:5.6px;background:linear-gradient(160deg,#8be4f7,#2aa0dc 70%,#1d7fc4);border-radius:0.8px"></div>
<div class="t" style="left:27px;top:91.70px;font-size:6.2px;color:#ebebeb;transform:scaleX(0.8818);transform-origin:0 0;-webkit-text-stroke:0.1px #ebebeb;">Masaüstü</div>
<svg style="left:74.8px;top:90.9px;" width="6" height="6.4" viewBox="0 0 6 6.4"><path d="M3.4 0.4L5.7 2.7L4.7 3L3.2 4.5L3.4 5.4L0.8 2.8L1.7 3L3.2 1.4Z" fill="#a0a0a0"/><path d="M1.9 4.3L0.4 5.9" stroke="#a0a0a0" stroke-width="0.7"/></svg>
<svg style="left:17.2px;top:105.2px;" width="7" height="7.6" viewBox="0 0 7 7.6"><path d="M3.5 0.4V5M1.2 2.8L3.5 5.1L5.8 2.8" stroke="#39c985" stroke-width="1" fill="none"/><path d="M0.6 6.9H6.4" stroke="#39c985" stroke-width="0.9"/></svg>
<div class="t" style="left:27px;top:106.70px;font-size:6.2px;color:#ebebeb;transform:scaleX(0.88);transform-origin:0 0;-webkit-text-stroke:0.1px #ebebeb;">İndirilenler</div>
<svg style="left:74.8px;top:105.8px;" width="6" height="6.4" viewBox="0 0 6 6.4"><path d="M3.4 0.4L5.7 2.7L4.7 3L3.2 4.5L3.4 5.4L0.8 2.8L1.7 3L3.2 1.4Z" fill="#a0a0a0"/><path d="M1.9 4.3L0.4 5.9" stroke="#a0a0a0" stroke-width="0.7"/></svg>
<div class="a" style="left:17.8px;top:120.1px;width:5.6px;height:7.4px;background:linear-gradient(#d2dde8,#93a7bb);border-radius:0.6px"></div>
<div class="t" style="left:27px;top:121.70px;font-size:6.2px;color:#ebebeb;transform:scaleX(0.88);transform-origin:0 0;-webkit-text-stroke:0.1px #ebebeb;">Belgeler</div>
<svg style="left:74.8px;top:120.7px;" width="6" height="6.4" viewBox="0 0 6 6.4"><path d="M3.4 0.4L5.7 2.7L4.7 3L3.2 4.5L3.4 5.4L0.8 2.8L1.7 3L3.2 1.4Z" fill="#a0a0a0"/><path d="M1.9 4.3L0.4 5.9" stroke="#a0a0a0" stroke-width="0.7"/></svg>
<svg style="left:16.8px;top:135.2px;" width="7.4" height="7" viewBox="0 0 7.4 7"><rect x="0" y="0" width="7.4" height="7" rx="0.8" fill="#2a8fe2"/><path d="M0.4 6.2L3 3.1L5.1 5.3L6.6 4.2V6.6H0.4Z" fill="#e8f6ff"/></svg>
<div class="t" style="left:27px;top:136.70px;font-size:6.2px;color:#ebebeb;transform:scaleX(0.88);transform-origin:0 0;-webkit-text-stroke:0.1px #ebebeb;">Resimler</div>
<svg style="left:74.8px;top:135.6px;" width="6" height="6.4" viewBox="0 0 6 6.4"><path d="M3.4 0.4L5.7 2.7L4.7 3L3.2 4.5L3.4 5.4L0.8 2.8L1.7 3L3.2 1.4Z" fill="#a0a0a0"/><path d="M1.9 4.3L0.4 5.9" stroke="#a0a0a0" stroke-width="0.7"/></svg>
<svg style="left:17px;top:150.1px;" width="7.2" height="7.2" viewBox="0 0 7.2 7.2"><rect x="0" y="0" width="7.2" height="7.2" rx="1.3" fill="#8d5ad9"/><path d="M2.7 2L5.2 3.6L2.7 5.2Z" fill="#fff"/></svg>
<div class="t" style="left:27px;top:151.70px;font-size:6.2px;color:#ebebeb;transform:scaleX(0.88);transform-origin:0 0;-webkit-text-stroke:0.1px #ebebeb;">Videolar</div>
<svg style="left:74.8px;top:150.5px;" width="6" height="6.4" viewBox="0 0 6 6.4"><path d="M3.4 0.4L5.7 2.7L4.7 3L3.2 4.5L3.4 5.4L0.8 2.8L1.7 3L3.2 1.4Z" fill="#a0a0a0"/><path d="M1.9 4.3L0.4 5.9" stroke="#a0a0a0" stroke-width="0.7"/></svg>
<div class="a" style="left:16.8px;top:165.9px;width:7.4px;height:5.6px;background:#f2c94c;border-radius:0.6px"></div>
<div class="a" style="left:16.8px;top:165.1px;width:3.2px;height:1.5px;background:#dca530;border-radius:0.6px 0.6px 0 0"></div>
<div class="t" style="left:27px;top:166.70px;font-size:6.2px;color:#ebebeb;transform:scaleX(0.88);transform-origin:0 0;-webkit-text-stroke:0.1px #ebebeb;">Özel İçerikler</div>
<div class="a" style="left:16.8px;top:180.8px;width:7.4px;height:5.6px;background:#f2c94c;border-radius:0.6px"></div>
<div class="a" style="left:16.8px;top:180.0px;width:3.2px;height:1.5px;background:#dca530;border-radius:0.6px 0.6px 0 0"></div>
<div class="t" style="left:27px;top:181.70px;font-size:6.2px;color:#ebebeb;transform:scaleX(0.8825);transform-origin:0 0;-webkit-text-stroke:0.1px #ebebeb;">SDN Wallpaper</div>
<div class="a" style="left:0px;top:234.7px;width:81.7px;height:12.8px;background:#2d2d2d;"></div>
<svg style="left:4.5px;top:200.2px;" width="3.5" height="5.5" viewBox="0 0 3.5 5.5"><path d="M0.4 0.4L2.8 2.75L0.4 5.1" stroke="#8f8f8f" stroke-width="0.75" fill="none"/></svg>
<div class="a" style="left:14px;top:197.7px;width:5.8px;height:10px;background:linear-gradient(#f7d870,#e6a43a);border-radius:0.6px"></div>
<div class="a" style="left:15.3px;top:201.1px;width:3.2px;height:3.2px;background:#e23c2c;border-radius:50%"></div>
<div class="t" style="left:22.9px;top:200.70px;font-size:6.2px;color:#ebebeb;transform:scaleX(0.8778);transform-origin:0 0;-webkit-text-stroke:0.1px #ebebeb;">Creative Cloud Files</div>
<svg style="left:4.5px;top:219.2px;" width="3.5" height="5.5" viewBox="0 0 3.5 5.5"><path d="M0.4 0.4L2.8 2.75L0.4 5.1" stroke="#8f8f8f" stroke-width="0.75" fill="none"/></svg>
<svg style="left:12.3px;top:219.1px;" width="8.8" height="5.4" viewBox="0 0 8.8 5.4"><path d="M1.5 5A1.5 1.5 0 0 1 1.6 2A2.6 2.6 0 0 1 6.4 1.5A1.8 1.8 0 0 1 8.6 5Z" fill="#1a8be2"/></svg>
<div class="t" style="left:22.9px;top:219.70px;font-size:6.2px;color:#ebebeb;transform:scaleX(0.886);transform-origin:0 0;-webkit-text-stroke:0.1px #ebebeb;">OneDrive</div>
<svg style="left:4.5px;top:238.1px;" width="3.5" height="5.5" viewBox="0 0 3.5 5.5"><path d="M0.4 0.4L2.8 2.75L0.4 5.1" stroke="#8f8f8f" stroke-width="0.75" fill="none"/></svg>
<div class="a" style="left:12.5px;top:237.0px;width:8.5px;height:6px;background:linear-gradient(#86e0f7,#1c93d5);border-radius:0.5px"></div>
<div class="a" style="left:15.6px;top:243.0px;width:2.6px;height:1.2px;background:#3aa5dd;"></div>
<div class="t" style="left:22.9px;top:238.70px;font-size:6.2px;color:#ebebeb;transform:scaleX(0.8987);transform-origin:0 0;-webkit-text-stroke:0.1px #ebebeb;">Bu bilgisayar</div>
<svg style="left:4.5px;top:256.4px;" width="3.5" height="5.5" viewBox="0 0 3.5 5.5"><path d="M0.4 0.4L2.8 2.75L0.4 5.1" stroke="#8f8f8f" stroke-width="0.75" fill="none"/></svg>
<div class="a" style="left:12.5px;top:256.7px;width:8.5px;height:4.6px;background:#1b2ad0;border-radius:0.5px"></div>
<div class="a" style="left:14.3px;top:258.1px;width:5px;height:1.6px;background:#dfe6ff;border-radius:0.3px"></div>
<div class="t" style="left:22.9px;top:256.70px;font-size:6.2px;color:#ebebeb;transform:scaleX(0.8628);transform-origin:0 0;-webkit-text-stroke:0.1px #ebebeb;">Elements (E:)</div>
<div class="a" style="left:0;top:0;width:81.7px;height:420px;overflow:hidden">
<svg style="left:4.5px;top:275.3px;" width="3.5" height="5.5" viewBox="0 0 3.5 5.5"><path d="M0.4 0.4L2.8 2.75L0.4 5.1" stroke="#8f8f8f" stroke-width="0.75" fill="none"/></svg>
<div class="a" style="left:15px;top:273.8px;width:4px;height:8px;background:linear-gradient(90deg,#5a5a5a,#2e2e2e);border-radius:0.5px"></div>
<div class="t" style="left:22.9px;top:275.70px;font-size:6.2px;color:#ebebeb;transform:scaleX(0.88);transform-origin:0 0;-webkit-text-stroke:0.1px #ebebeb;">Seagate Expansion Drive</div>
</div>
<div class="a" style="left:0px;top:285.0px;width:456px;height:11px;background:#292929;"></div>
<div class="t" style="left:6.3px;top:288.70px;font-size:5.6px;color:#c8c8c8;-webkit-text-stroke:0.1px #c8c8c8;">10 öğe &nbsp;|&nbsp; 1 öğe seçildi &nbsp;1,08 MB &nbsp;|</div>
<div class="a" style="left:434.6px;top:286.1px;width:7.8px;height:7.6px;background:#5c5c5c;border:0.9px solid #c4c4c4;border-radius:0.8px"></div>
<div class="a" style="left:443.6px;top:285.3px;width:10.6px;height:9.6px;background:#4e4e4e;border-radius:1.2px"></div>
<div class="a" style="left:445px;top:286.5px;width:7.8px;height:7.4px;background:#6a6a6a;border:0.9px solid #c4c4c4;border-radius:0.8px"></div>
<div class="a" style="left:446.6px;top:288.3px;width:4.6px;height:3.6px;background:#f6f6f6;"></div>
<div class="a" style="left:97.6px;top:68.5px;width:49px;height:60.5px;background:#2e2e2e;border-radius:1px"></div>
<div class="a" style="left:101.7px;top:88.7px;width:42.8px;height:23.8px;background:#232323;"></div>
<div class="a" style="left:101.7px;top:88.7px;width:8px;height:23.8px;background:#161616;"></div>
<div class="a" style="left:122.5px;top:89.1px;width:20.7px;height:4px;background:linear-gradient(90deg,#e9d5bd,#f2e2cf 60%,#c79f7a);"></div>
<div class="a" style="left:108.5px;top:91.5px;width:1.6px;height:1.6px;background:#ddd;"></div>
<div class="a" style="left:152.3px;top:88.7px;width:42.8px;height:23.8px;background:#232323;"></div>
<div class="a" style="left:152.3px;top:88.7px;width:8px;height:23.8px;background:#161616;"></div>
<div class="a" style="left:173px;top:89.1px;width:20.7px;height:4px;background:linear-gradient(90deg,#e9d5bd,#f2e2cf 60%,#c79f7a);"></div>
<div class="a" style="left:203.6px;top:88.7px;width:42.8px;height:23.8px;background:#0a0a0a;"></div>
<div class="a" style="left:253.9px;top:88.7px;width:42.8px;height:23.8px;background:linear-gradient(#4d7fb8 0,#8db4dc 18%,#d6e2ea 30%,#7aa3cc 42%,#9fb8c8 48%,#54606a 52%,#b9b2a2 56%,#cbc3b2 80%,#a69f8f);"></div>
<div class="t" style="left:257.7px;top:116.70px;font-size:5.8px;color:#f0f0f0;transform:scaleX(0.9386);transform-origin:0 0;-webkit-text-stroke:0.1px #f0f0f0;">Screenshot (2)</div>
<div class="a" style="left:253.9px;top:88.7px;width:4.5px;height:4.5px;background:#3d4a2a;border-radius:50%"></div>
<div class="a" style="left:289.5px;top:91.2px;width:6.4px;height:10px;background:radial-gradient(circle at 60% 45%,#4c6a38,#2e4022 70%,transparent 71%);"></div>
<div class="a" style="left:288.8px;top:105.2px;width:6.2px;height:6.5px;background:#4a545b;"></div>
<div class="a" style="left:260px;top:99.2px;width:8px;height:2px;background:#6b727a;"></div>
<div class="a" style="left:304.8px;top:88.7px;width:42.8px;height:23.8px;background:linear-gradient(#6f879e 0,#8ca2b6 20%,#e1e8ee 23%,#c9d6df 26%,#3f5872 30%,#4a6580 45%,#55706c 60%,#6d827c 75%,#2e3d46 92%,#1d2a33);"></div>
<div class="t" style="left:308.8px;top:116.70px;font-size:5.8px;color:#f0f0f0;transform:scaleX(0.9386);transform-origin:0 0;-webkit-text-stroke:0.1px #f0f0f0;">Screenshot (3)</div>
<div class="a" style="left:306px;top:101.7px;width:40px;height:9px;background:linear-gradient(172deg,transparent 35%,#7a8c86 36%,#5f736d 70%,#2e3a40 90%);"></div>
<div class="a" style="left:329.5px;top:95.7px;width:1px;height:4px;background:#2a2a2a;"></div>
<div class="a" style="left:356.1px;top:88.7px;width:42.8px;height:23.8px;background:radial-gradient(ellipse at 30% 40%,#8f8b6c 0,#7c7a5e 35%,#6a6a52 60%,#7a785e 100%);"></div>
<div class="t" style="left:360.1px;top:116.70px;font-size:5.8px;color:#f0f0f0;transform:scaleX(0.9386);transform-origin:0 0;-webkit-text-stroke:0.1px #f0f0f0;">Screenshot (4)</div>
<div class="a" style="left:364px;top:92.7px;width:12px;height:14px;background:radial-gradient(ellipse,#9c957a 0,transparent 70%);"></div>
<div class="a" style="left:380px;top:93.7px;width:10px;height:12px;background:radial-gradient(ellipse,#8f8a70 0,transparent 70%);"></div>
<div class="a" style="left:392.5px;top:104.5px;width:4.6px;height:7px;background:#d8d8d0;"></div>
<div class="a" style="left:407.6px;top:88.7px;width:42.8px;height:23.8px;background:linear-gradient(#272727,#202020);"></div>
<div class="t" style="left:411.5px;top:116.70px;font-size:5.8px;color:#f0f0f0;transform:scaleX(0.9386);transform-origin:0 0;-webkit-text-stroke:0.1px #f0f0f0;">Screenshot (5)</div>
<div class="a" style="left:409.5px;top:90.2px;width:5px;height:2.5px;background:#555;"></div>
<div class="a" style="left:410px;top:93.4px;width:12px;height:0.8px;background:#444;"></div>
<div class="a" style="left:409.2px;top:95.7px;width:25px;height:11.5px;background:repeating-linear-gradient(#3a3a3a 0 0.8px,#262626 0.8px 2.2px);"></div>
<div class="a" style="left:409.2px;top:110.2px;width:5px;height:1px;background:#6a6a6a;"></div>
<div class="a" style="left:417px;top:110.2px;width:5px;height:1px;background:#5a5a5a;"></div>
<div class="a" style="left:439px;top:110.2px;width:6px;height:1px;background:#5a5a5a;"></div>
<div class="t" style="left:101.7px;top:116.70px;font-size:5.8px;color:#f0f0f0;transform:scaleX(0.92);transform-origin:0 0;-webkit-text-stroke:0.1px #f0f0f0;">Ekran</div>
<div class="a" style="left:101.2px;top:150.0px;width:22px;height:24.2px;background:#262626;"></div>
<div class="a" style="left:102.8px;top:151.7px;width:14px;height:2.5px;background:#5a5a5a;"></div>
<div class="a" style="left:104px;top:156.7px;width:12px;height:14px;background:repeating-linear-gradient(#3a3a3a 0 1px,#242424 1px 2.6px);"></div>
<div class="t" style="left:104px;top:176.70px;font-size:5.8px;color:#f0f0f0;transform:scaleX(0.92);transform-origin:0 0;-webkit-text-stroke:0.1px #f0f0f0;">Scre</div>
</div>
<div class="a" style="left:289.8px;top:221.6px;width:165px;height:195.6px;background:#2b2b2b;border-radius:5px;box-shadow:0 4px 14px rgba(0,0,0,.5);border:0.6px solid #303030"></div>
<svg style="left:297px;top:229.3px;" width="8" height="9" viewBox="0 0 8 9"><circle cx="2" cy="7" r="1.4" stroke="#86bfe2" stroke-width="0.8" fill="none"/><circle cx="6" cy="7" r="1.4" stroke="#86bfe2" stroke-width="0.8" fill="none"/><path d="M2.8 5.8L6 0.4M5.2 5.8L2 0.4" stroke="#86bfe2" stroke-width="0.8"/></svg>
<svg style="left:317px;top:229px;" width="6.5" height="9" viewBox="0 0 6.5 9"><rect x="1.6" y="0.4" width="4.4" height="7" rx="1.1" stroke="#86bfe2" stroke-width="0.8" fill="none"/><path d="M0.5 2V8.6H4.2" stroke="#86bfe2" stroke-width="0.8" fill="none"/></svg>
<svg style="left:335px;top:229.2px;" width="8" height="8.5" viewBox="0 0 8 8.5"><rect x="0.4" y="0.6" width="7.2" height="7.2" rx="1.8" stroke="#86bfe2" stroke-width="0.8" fill="none"/><path d="M4 0.4V8" stroke="#86bfe2" stroke-width="0.9"/></svg>
<svg style="left:353.3px;top:229px;" width="9" height="9" viewBox="0 0 9 9"><path d="M3.5 1H1.8A1.2 1.2 0 0 0 0.6 2.2V7A1.2 1.2 0 0 0 1.8 8.2H6.6A1.2 1.2 0 0 0 7.8 7V5.3" stroke="#86bfe2" stroke-width="0.8" fill="none"/><path d="M3.6 5.4C3.8 3.6 5 2.6 7 2.6M5.8 1.1L7.4 2.6L5.8 4.1" stroke="#86bfe2" stroke-width="0.8" fill="none"/></svg>
<svg style="left:373px;top:229px;" width="7" height="9" viewBox="0 0 7 9"><path d="M0.3 1.6H6.7M2.4 1.6V0.5H4.6V1.6M1.2 1.6L1.7 8.5H5.3L5.8 1.6M2.8 3.6V6.6M4.2 3.6V6.6" stroke="#8b949a" stroke-width="0.75" fill="none"/></svg>
<div class="a" style="left:291px;top:244.6px;width:162.3px;height:0.6px;background:#353535;"></div>
<div class="a" style="left:293px;top:247px;width:159.5px;height:16.4px;background:#383838;border-radius:3px"></div>
<svg style="left:297px;top:252.9px;" width="7.3" height="5.6" viewBox="0 0 7.3 5.6"><rect x="0" y="0" width="7.3" height="5.6" rx="0.6" fill="#86bfe2"/><rect x="0.9" y="0.9" width="5.5" height="3.8" fill="#d9eefa"/><path d="M0.9 4.7L3.2 3L6.4 4.7Z" fill="#86bfe2"/></svg>
<div class="t" style="left:309.7px;top:253.00px;font-size:6.6px;color:#ececec;transform:scaleX(0.97);transform-origin:0 0;-webkit-text-stroke:0.1px #ececec;">Aç</div>
<div class="t" style="left:423px;top:253.00px;font-size:6.0px;color:#c4c4c4;transform:scaleX(0.9205);transform-origin:0 0;-webkit-text-stroke:0.1px #c4c4c4;">Enter</div>
<div class="t" style="left:309.7px;top:272.00px;font-size:6.6px;color:#ececec;transform:scaleX(1.0207);transform-origin:0 0;-webkit-text-stroke:0.1px #ececec;">Birlikte aç</div>
<svg style="left:442.8px;top:271.7px;" width="3.2" height="5.5" viewBox="0 0 3.2 5.5"><path d="M0.4 0.4L2.7 2.75L0.4 5.1" stroke="#c0c0c0" stroke-width="0.7" fill="none"/></svg>
<svg style="left:297px;top:289.7px;" width="8.5" height="7.5" viewBox="0 0 8.5 7.5"><rect x="0.4" y="0.4" width="7.6" height="6.8" rx="0.8" stroke="#86bfe2" stroke-width="0.75" fill="none"/><path d="M0.5 5L3 3L7.9 6.7" stroke="#e4e4e4" stroke-width="0.65" fill="none"/><rect x="4.3" y="1.2" width="2.8" height="2" fill="#86bfe2"/></svg>
<div class="t" style="left:309.7px;top:291.00px;font-size:6.6px;color:#ececec;transform:scaleX(0.9713);transform-origin:0 0;-webkit-text-stroke:0.1px #ececec;">Masaüstü arka planı olarak ayarla</div>
<svg style="left:297px;top:308.0px;" width="8.5" height="8.5" viewBox="0 0 8.5 8.5"><path d="M1 8H7.8V5" stroke="#86bfe2" stroke-width="0.75" fill="none"/><path d="M1.2 5.5C1.6 2.6 3.5 1.6 6.4 1.8M5 0.3L6.5 1.8L5 3.3" stroke="#e4e4e4" stroke-width="0.7" fill="none"/></svg>
<div class="t" style="left:309.7px;top:310.00px;font-size:6.6px;color:#ececec;transform:scaleX(0.97);transform-origin:0 0;-webkit-text-stroke:0.1px #ececec;">Sağa döndür</div>
<svg style="left:297px;top:326.79999999999995px;" width="8.5" height="8.5" viewBox="0 0 8.5 8.5"><path d="M7.5 8H0.7V5" stroke="#86bfe2" stroke-width="0.75" fill="none"/><path d="M7.3 5.5C6.9 2.6 5 1.6 2.1 1.8M3.5 0.3L2 1.8L3.5 3.3" stroke="#e4e4e4" stroke-width="0.7" fill="none"/></svg>
<div class="t" style="left:309.7px;top:328.00px;font-size:6.6px;color:#ececec;transform:scaleX(1.0087);transform-origin:0 0;-webkit-text-stroke:0.1px #ececec;">Sola döndür</div>
<svg style="left:297px;top:346.09999999999997px;" width="8.5" height="7.2" viewBox="0 0 8.5 7.2"><path d="M0.4 1V6.8H8.1V1.8H4L3.2 0.6H0.4Z" stroke="#86bfe2" stroke-width="0.75" fill="none"/><path d="M5.4 2V6.8" stroke="#86bfe2" stroke-width="0.7"/></svg>
<div class="t" style="left:309.7px;top:347.00px;font-size:6.6px;color:#ececec;transform:scaleX(0.9872);transform-origin:0 0;-webkit-text-stroke:0.1px #ececec;">Compress to ZIP file</div>
<svg style="left:297px;top:365.09999999999997px;" width="8.5" height="7" viewBox="0 0 8.5 7"><rect x="0.4" y="0.4" width="7.7" height="6.2" rx="0.8" stroke="#86bfe2" stroke-width="0.75" fill="none"/><path d="M1.9 2.4L3.3 3.5L1.9 4.6M4 4.8H5.8" stroke="#e4e4e4" stroke-width="0.6" fill="none"/></svg>
<div class="t" style="left:309.7px;top:366.00px;font-size:6.6px;color:#ececec;transform:scaleX(0.9939);transform-origin:0 0;-webkit-text-stroke:0.1px #ececec;">Yol olarak kopyala</div>
<svg style="left:298px;top:383.2px;" width="5.8" height="8.3" viewBox="0 0 5.8 8.3"><rect x="0.4" y="0.4" width="5" height="7.5" rx="1" stroke="#86bfe2" stroke-width="0.75" fill="none"/><path d="M0.4 2.9H5.4M0.4 5.4H5.4" stroke="#86bfe2" stroke-width="0.6"/></svg>
<div class="t" style="left:309.7px;top:385.00px;font-size:6.6px;color:#ececec;transform:scaleX(1.0097);transform-origin:0 0;-webkit-text-stroke:0.1px #ececec;">Özellikler</div>
<div class="t" style="left:423px;top:385.00px;font-size:6.0px;color:#c4c4c4;transform:scaleX(0.9901);transform-origin:0 0;-webkit-text-stroke:0.1px #c4c4c4;">Alt+Enter</div>
<div class="a" style="left:295px;top:397.8px;width:155px;height:0.7px;background:#3a3a3a;"></div>
<svg style="left:297px;top:405.7px;" width="8" height="7.7" viewBox="0 0 8 7.7"><path d="M0.5 3.3V0.5H3.5L4 1.2H7.5V3.3" stroke="#e4e4e4" stroke-width="0.7" fill="none"/><rect x="0.5" y="3.8" width="7" height="3.5" rx="0.6" stroke="#e4e4e4" stroke-width="0.7" fill="none"/><circle cx="2.4" cy="5.5" r="0.7" fill="#1a1a1a"/><circle cx="5.6" cy="5.5" r="0.7" fill="#1a1a1a"/><path d="M2.5 2.2L5.5 2.2" stroke="#86bfe2" stroke-width="0.9"/></svg>
<div class="t" style="left:309.7px;top:407.00px;font-size:6.6px;color:#ececec;transform:scaleX(1.0143);transform-origin:0 0;-webkit-text-stroke:0.1px #ececec;">Show more options</div>
<div class="t" style="left:423px;top:407.00px;font-size:6.0px;color:#c4c4c4;transform:scaleX(0.9401);transform-origin:0 0;-webkit-text-stroke:0.1px #c4c4c4;">Shift+F10</div>
<div class="a" style="left:0px;top:484px;width:900px;height:23px;background:#0a3140;"></div>
<div class="a" style="left:0px;top:484px;width:900px;height:0.8px;background:#07222c;"></div>
<div class="a" style="left:441.7px;top:485.2px;width:18.5px;height:21.3px;background:#0f3847;border-radius:2px"></div>
<div class="a" style="left:447px;top:503px;width:6.8px;height:1.2px;background:#8fd3f5;border-radius:1px"></div>
<div class="a" style="left:321px;top:490px;width:5.5px;height:5.5px;background:linear-gradient(160deg,#86e1ff,#2aa6ea 60%,#1b8cd8);"></div>
<div class="a" style="left:326.9px;top:490px;width:5.5px;height:5.5px;background:linear-gradient(160deg,#86e1ff,#2aa6ea 60%,#1b8cd8);"></div>
<div class="a" style="left:321px;top:495.9px;width:5.5px;height:5.5px;background:linear-gradient(160deg,#86e1ff,#2aa6ea 60%,#1b8cd8);"></div>
<div class="a" style="left:326.9px;top:495.9px;width:5.5px;height:5.5px;background:linear-gradient(160deg,#86e1ff,#2aa6ea 60%,#1b8cd8);"></div>
<svg style="left:342.5px;top:489.3px;" width="11" height="12" viewBox="0 0 11 12"><circle cx="6.1" cy="4.9" r="3.7" stroke="#eef3f6" stroke-width="1.25" fill="#0d2733"/><path d="M3.4 7.6L0.9 10.7" stroke="#eef3f6" stroke-width="1.5"/></svg>
<div class="a" style="left:362px;top:492.7px;width:9px;height:7.5px;background:#6d7276;border-radius:0.6px"></div>
<div class="a" style="left:365.2px;top:490.6px;width:9px;height:7.5px;background:#dcdcdc;border-radius:0.6px"></div>
<div class="a" style="left:383.2px;top:490.2px;width:4.6px;height:11.3px;background:#f2f8fc;border-radius:0.6px"></div>
<div class="a" style="left:388.7px;top:490.2px;width:5.8px;height:11.3px;background:linear-gradient(#5ec4f0,#2c98d8);border-radius:0.6px"></div>
<svg style="left:403.8px;top:489.8px;" width="12.4" height="12.6" viewBox="0 0 12.4 12.6"><path d="M6.2 0.4A5.7 5.7 0 1 1 3.4 11.2L0.5 12L1.3 9.2A5.7 5.7 0 0 1 6.2 0.4Z" fill="#2ad05f"/><circle cx="6.2" cy="6.1" r="4.3" fill="#fff"/><circle cx="6.2" cy="6.1" r="3.4" fill="#2ad05f"/><path d="M4.4 3.9C4.1 4.6 4.6 6.3 6.3 7.6C7.4 8.3 8 8.2 8.3 7.7L7.6 7L6.9 7.4C6.4 7.1 5.5 6.3 5.2 5.5L5.6 4.8L5 4Z" fill="#fff"/></svg>
<div class="a" style="left:411.2px;top:486.4px;width:6.8px;height:6.8px;background:#e3232c;border-radius:50%"></div>
<div class="t" style="left:613.6px;top:487.8px;font-size:4.6px;color:#fff;font-weight:bold;left:413.4px">1</div>
<div class="a" style="left:424px;top:490px;width:11.8px;height:11.8px;background:conic-gradient(from -60deg,#e9453a 0 33.3%,#fbc02d 0 66.6%,#2fa84f 0);border-radius:50%"></div>
<div class="a" style="left:427.3px;top:493.3px;width:5.2px;height:5.2px;background:#3f86f2;border-radius:50%;border:1.1px solid #fff;box-sizing:content-box;margin:-1.1px"></div>
<div class="a" style="left:444px;top:489.6px;width:5.5px;height:2px;background:#e9ad2c;border-radius:0.8px 0.8px 0 0"></div>
<div class="a" style="left:444px;top:491px;width:12.6px;height:10.5px;background:linear-gradient(#f7cf4e,#f2bf35);border-radius:0.8px"></div>
<div class="a" style="left:444px;top:496.5px;width:12.6px;height:5px;background:linear-gradient(#1ea0e6,#2870c4);border-radius:40% 40% 0.8px 0.8px / 35% 35% 0.8px 0.8px"></div>
<div class="a" style="left:465.2px;top:489.8px;width:10.4px;height:12px;background:linear-gradient(#d8ec8a,#6cc04a 55%,#3ca34a);border-radius:0.8px"></div>
<div class="a" style="left:467px;top:492.5px;width:6.5px;height:6px;background:#9fd46a;border:0.6px solid #2e7a36"></div>
<div class="a" style="left:486px;top:490px;width:11.6px;height:11.6px;background:conic-gradient(from 160deg,#1c6fd0,#31b6f0 30%,#4fd47c 55%,#2fb8e8 75%,#1c6fd0);border-radius:50%"></div>
<div class="a" style="left:490.2px;top:494px;width:5.8px;height:4.4px;background:#0a3140;border-radius:50% 50% 40% 60%"></div>
<svg style="left:507px;top:489.5px;" width="11" height="12.5" viewBox="0 0 11 12.5"><path d="M2.2 1L8.6 10.4" stroke="#e8483a" stroke-width="2.1"/><path d="M6.4 1.2L3.2 11.6" stroke="#2d7fd6" stroke-width="1.6"/><circle cx="6.8" cy="5.3" r="2.3" fill="#f39c38"/><circle cx="4.2" cy="9" r="1.3" fill="#4a9ee0"/></svg>
<div class="a" style="left:527px;top:490px;width:11.6px;height:11.6px;background:transparent;border:1.6px solid #c8295a;border-radius:50%"></div>
<div class="a" style="left:530.4px;top:491.6px;width:4.8px;height:8.4px;background:transparent;border:0.8px solid #7a1f40;border-radius:50%"></div>
<svg style="left:547.5px;top:489.6px;" width="12" height="12" viewBox="0 0 12 12"><circle cx="6" cy="6" r="4.3" fill="#8ea4bc"/><circle cx="6" cy="6" r="2.1" fill="#263a52"/><rect x="4.9" y="0.2" width="2.2" height="2.6" rx="0.5" fill="#8ea4bc" transform="rotate(0 6 6)"/><rect x="4.9" y="0.2" width="2.2" height="2.6" rx="0.5" fill="#8ea4bc" transform="rotate(45 6 6)"/><rect x="4.9" y="0.2" width="2.2" height="2.6" rx="0.5" fill="#8ea4bc" transform="rotate(90 6 6)"/><rect x="4.9" y="0.2" width="2.2" height="2.6" rx="0.5" fill="#8ea4bc" transform="rotate(135 6 6)"/><rect x="4.9" y="0.2" width="2.2" height="2.6" rx="0.5" fill="#8ea4bc" transform="rotate(180 6 6)"/><rect x="4.9" y="0.2" width="2.2" height="2.6" rx="0.5" fill="#8ea4bc" transform="rotate(225 6 6)"/><rect x="4.9" y="0.2" width="2.2" height="2.6" rx="0.5" fill="#8ea4bc" transform="rotate(270 6 6)"/><rect x="4.9" y="0.2" width="2.2" height="2.6" rx="0.5" fill="#8ea4bc" transform="rotate(315 6 6)"/></svg>
<div class="a" style="left:568px;top:492px;width:11.6px;height:9.8px;background:#f6f6f6;border-radius:1.5px"></div>
<div class="a" style="left:571px;top:489.8px;width:5.6px;height:3.5px;background:transparent;border:0.9px solid #3b8ad8;border-bottom:none;border-radius:2px 2px 0 0"></div>
<div class="a" style="left:571.3px;top:494.3px;width:2.3px;height:2.3px;background:#f25022;"></div>
<div class="a" style="left:574.1px;top:494.3px;width:2.3px;height:2.3px;background:#7fba00;"></div>
<div class="a" style="left:571.3px;top:497.1px;width:2.3px;height:2.3px;background:#00a4ef;"></div>
<div class="a" style="left:574.1px;top:497.1px;width:2.3px;height:2.3px;background:#ffb900;"></div>
<div class="a" style="left:409px;top:504.6px;width:2.2px;height:0.9px;background:#93a5ad;"></div>
<div class="a" style="left:429px;top:504.6px;width:2.2px;height:0.9px;background:#93a5ad;"></div>
<div class="a" style="left:552.5px;top:504.6px;width:2.2px;height:0.9px;background:#93a5ad;"></div>
<div class="a" style="left:573px;top:504.6px;width:2.2px;height:0.9px;background:#93a5ad;"></div>
<svg style="left:807px;top:493.2px;" width="7" height="4" viewBox="0 0 7 4"><path d="M0.5 3.5L3.5 0.8L6.5 3.5" stroke="#e8eef2" stroke-width="0.95" fill="none"/></svg>
<div class="t" style="left:819.3px;top:494.2px;font-size:4.9px;color:#f0f0f0;font-weight:bold">TUR</div>
<div class="a" style="left:837px;top:492px;width:7.8px;height:6.5px;background:transparent;border:0.95px solid #e0e6ea;border-radius:0.5px"></div>
<div class="a" style="left:839.2px;top:499.2px;width:3.6px;height:1px;background:#e0e6ea;"></div>
<div class="a" style="left:842.5px;top:490.8px;width:3px;height:3px;background:#e0e6ea;border-radius:50%"></div>
<svg style="left:849px;top:491.5px;" width="9" height="8" viewBox="0 0 9 8"><path d="M0.5 2.5H2.5L5 0.5V7.5L2.5 5.5H0.5Z" fill="#e0e6ea"/><path d="M6.3 2.2A2 2 0 0 1 6.3 5.8M7.5 1A3.5 3.5 0 0 1 7.5 7" stroke="#e0e6ea" stroke-width="0.75" fill="none"/></svg>
<div class="t" style="left:877.3px;top:489.8px;font-size:5.5px;color:#f2f2f2">23:39</div>
<div class="t" style="left:864.8px;top:498.4px;font-size:5.4px;color:#f2f2f2">28.06.2021</div>
</body></html>
